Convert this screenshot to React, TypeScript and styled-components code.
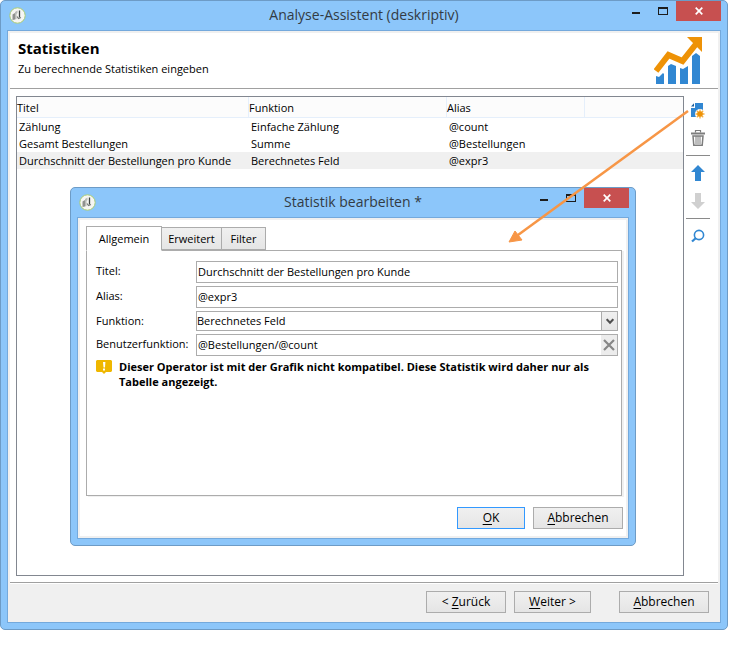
import React from "react";
import styled, { createGlobalStyle, css } from "styled-components";

const GlobalStyle = createGlobalStyle`
  * { box-sizing: border-box; }
  html, body { margin: 0; padding: 0; background: #fff; }
  body, button, input, select {
    font-family: "Open Sans", "Noto Sans", sans-serif;
    font-size: 11px;
    line-height: 16px;
    color: #000;
  }
  h1, h2, p { margin: 0; }
`;

const Desktop = styled.main`
  display: flex;
  min-height: 100vh;
  padding: 0 13px 17px 0;
`;

const WindowFrame = styled.section`
  position: relative;
  flex: 1;
  display: flex;
  flex-direction: column;
  min-width: 0;
  padding: 0 6px 6px;
  border: 1px solid #6d9bc6;
  border-radius: 5px;
  background: #8cc6fa;
`;

const DialogFrame = styled(WindowFrame)`
  position: absolute;
  top: 186px;
  left: 69px;
  right: 91px;
`;

const TitleBar = styled.header`
  display: grid;
  grid-template-columns: 140px 1fr 140px;
  height: 29px;
  align-items: start;
`;

const AppBadge = styled.span`
  display: flex;
  padding: 6px 0 0 2px;
`;

const WindowTitle = styled.h1`
  font-size: 14px;
  font-weight: 400;
  line-height: 28px;
  text-align: center;
  color: #333b44;
  white-space: nowrap;
`;

const WindowControls = styled.div`
  display: flex;
  justify-content: flex-end;
`;

const ControlButton = styled.button<{ $close?: boolean }>`
  display: flex;
  align-items: center;
  justify-content: center;
  width: ${(p) => (p.$close ? 45 : 27)}px;
  height: 20px;
  padding: 0;
  border: 0;
  background: ${(p) => (p.$close ? "#c75050" : "transparent")};
`;

const WindowBody = styled.div`
  flex: 1;
  display: flex;
  flex-direction: column;
  border: 1px solid #74a9dc;
  background: #fff;
  box-shadow: inset 0 0 0 2px #f0f0f0;
  padding: 2px;
`;

const PageHeader = styled.div`
  display: flex;
  justify-content: space-between;
  align-items: flex-start;
  height: 56px;
  padding: 4px 15px 0 8px;
  border-bottom: 1px solid #a0a0a0;
`;

const PageTitle = styled.h2`
  font-size: 15px;
  line-height: 22px;
  font-weight: 700;
`;

const PageHint = styled.p`
  padding-top: 2px;
`;

const Content = styled.div`
  flex: 1;
  display: flex;
  padding: 7px 0 6px 6px;
`;

const ListBox = styled.div`
  flex: 1;
  min-width: 0;
  border: 1px solid #828790;
`;

const StatTable = styled.table`
  width: 100%;
  table-layout: fixed;
  border-collapse: separate;
  border-spacing: 0;
`;

const Column = styled.col<{ $width?: number }>`
  ${(p) => p.$width && css`width: ${p.$width}px;`}
`;

const HeadCell = styled.th`
  height: 21px;
  padding: 1px 0 0;
  text-align: left;
  font-weight: 400;
  background: #fcfcfc;
  border-bottom: 1px solid #e5effb;
  border-right: 1px solid #e5effb;
  &:last-child { border-right: 0; }
`;

const BodyRow = styled.tr<{ $selected?: boolean }>`
  background: ${(p) => (p.$selected ? "#f0f0f0" : "#fff")};
`;

const BodyCell = styled.td`
  height: 17px;
  padding: 0 0 0 2px;
  white-space: nowrap;
`;

const ToolBar = styled.div`
  display: flex;
  flex-direction: column;
  align-items: center;
  gap: 6px;
  width: 34px;
  padding: 3px 6px 0 0;
`;

const ToolButton = styled.button`
  display: flex;
  align-items: center;
  justify-content: center;
  width: 22px;
  height: 22px;
  padding: 0;
  border: 0;
  background: transparent;
`;

const ToolRule = styled.hr`
  width: 24px;
  margin: 0;
  border: 0;
  border-top: 1px solid #8a8a8a;
`;

const Footer = styled.footer`
  display: flex;
  gap: 8px;
  justify-content: flex-end;
  padding: 8px 9px 7px;
  border-top: 1px solid #a0a0a0;
  background: #f0f0f0;
  box-shadow: inset 0 1px 0 #fff;
`;

const PushButton = styled.button<{ $width: number; $primary?: boolean; $apart?: boolean }>`
  width: ${(p) => p.$width}px;
  height: 22px;
  margin-left: ${(p) => (p.$apart ? 20 : 0)}px;
  padding: 0;
  border: 1px solid ${(p) => (p.$primary ? "#3399ff" : "#acacac")};
  background: linear-gradient(#f0f0f0, #e5e5e5);
  font-size: 12px;
  u { text-underline-offset: 2px; }
`;

const DialogContent = styled.form`
  display: flex;
  flex-direction: column;
  padding: 6px 3px 7px 6px;
`;

const TabList = styled.div`
  display: flex;
  align-items: flex-end;
  z-index: 1;
`;

const Tab = styled.button<{ $active?: boolean; $width: number }>`
  width: ${(p) => p.$width}px;
  height: ${(p) => (p.$active ? 25 : 23)}px;
  margin: 0 0 ${(p) => (p.$active ? -1 : 0)}px ${(p) => (p.$active ? 0 : -1)}px;
  padding: 0;
  border: 1px solid #acacac;
  border-bottom-color: ${(p) => (p.$active ? "#fff" : "#acacac")};
  background: ${(p) => (p.$active ? "#fff" : "linear-gradient(#f0f0f0, #e5e5e5)")};
`;

const TabPanel = styled.div`
  display: grid;
  grid-template-columns: 100px 1fr;
  grid-auto-rows: min-content;
  row-gap: 3px;
  min-height: 246px;
  margin-right: 1px;
  padding: 10px 3px 0 9px;
  border: 1px solid #acacac;
  box-shadow: 2px 1px 0 #f0f0f0;
`;

const FieldLabel = styled.label`
  line-height: 20px;
`;

const fieldBox = css`
  width: 100%;
  height: 22px;
  padding: 0 0 1px 1px;
  border: 1px solid #acacac;
  border-radius: 0;
  background: #fff;
  outline: none;
`;

const TextField = styled.input`
  ${fieldBox}
`;

const ComboBox = styled.div`
  display: grid;
`;

const Combo = styled.select`
  ${fieldBox}
  grid-area: 1 / 1;
  height: 20px;
  padding: 0;
  appearance: none;
`;

const ComboArrow = styled.span`
  grid-area: 1 / 1;
  justify-self: end;
  display: flex;
  align-items: center;
  justify-content: center;
  width: 17px;
  margin: 0;
  border: 1px solid #acacac;
  background: linear-gradient(#f0f0f0, #e5e5e5);
  pointer-events: none;
`;

const ClearableField = styled.div`
  display: flex;
  border: 1px solid #acacac;
`;

const BareInput = styled.input`
  flex: 1;
  min-width: 0;
  height: 20px;
  padding: 0 0 1px 1px;
  border: 0;
  outline: none;
`;

const ClearButton = styled.button`
  display: flex;
  align-items: center;
  justify-content: center;
  width: 16px;
  padding: 0;
  border: 0;
  background: #ececec;
`;

const Warning = styled.div`
  grid-column: 1 / -1;
  display: flex;
  gap: 7px;
  padding-right: 8px;
  font-weight: 700;
  line-height: 15px;
`;

const WarningIcon = styled.svg`
  flex: none;
  margin-top: 1px;
`;

const DialogButtons = styled.div`
  display: flex;
  justify-content: flex-end;
  gap: 8px;
  padding-top: 11px;
`;

const Pointer = styled.svg`
  position: absolute;
  top: 109px;
  right: 37px;
  pointer-events: none;
`;

function Emblem() {
  return (
    <svg width="17" height="17" viewBox="0 0 17 17" aria-hidden="true">
      <circle cx="8.5" cy="8.5" r="7.700" fill="#f6f6f3" stroke="#a9cc74" strokeWidth="1" />
      <path d="M3.500 7.500L6 6v6.500l-2.500.5z" fill="#8f918e" />
      <path d="M6 5l2.500-1.500V6L7.500 7v5L6 12.500z" fill="#b9bbb8" />
      <path d="M10.500 3.500v7" stroke="#3f4442" strokeWidth="1.300" />
      <path d="M8 9.500l1.500 2 2.500-1" fill="none" stroke="#777b78" strokeWidth="1.200" />
    </svg>
  );
}

function TitleRow({ title }: { title: string }) {
  return (
    <TitleBar>
      <AppBadge><Emblem /></AppBadge>
      <WindowTitle>{title}</WindowTitle>
      <WindowControls>
        <ControlButton type="button" aria-label="Minimieren">
          <svg width="10" height="10"><rect x="1" y="6" width="8" height="2" fill="#1d1d1d" /></svg>
        </ControlButton>
        <ControlButton type="button" aria-label="Maximieren">
          <svg width="10" height="8" shapeRendering="crispEdges">
            <path d="M0 0h10v8H0zM1 2v5h8V2z" fill="#1d1d1d" fillRule="evenodd" />
          </svg>
        </ControlButton>
        <ControlButton type="button" $close aria-label="Schließen">
          <svg width="8" height="8" viewBox="0 0 8 8">
            <path d="M.7.7l6.6 6.6M7.3.7L.7 7.3" stroke="#fff" strokeWidth="1.7" />
          </svg>
        </ControlButton>
      </WindowControls>
    </TitleBar>
  );
}

function ChartLogo() {
  return (
    <svg width="49" height="48" viewBox="0 0 49 48" aria-hidden="true">
      <path fill="#3187d2" d="M2 39l3 1 4-4 1 1v10H2zM14 29l3-2 5 2v18h-8zM26 31l3 1 5-3v18h-8zM38 19l4-3 4 3v28h-8z" />
      <path d="M2 34L14.500 18l14 6L42 7" fill="none" stroke="#ee9206" strokeWidth="6" />
      <path d="M33 0h15v15z" fill="#ee9206" />
    </svg>
  );
}

function NewIcon() {
  return (
    <svg width="16" height="17" viewBox="0 0 16 17" aria-hidden="true">
      <path d="M5 1h8v14H1V6h4z" fill="#3187d2" />
      <path d="M1 4.500L4 1.300v3.200z" fill="#1c5f9c" />
      <circle cx="10" cy="12" r="5" fill="#fff" />
      <path d="M10 7.500v9M5.500 12h9M6.800 8.800l6.400 6.400M13.200 8.800l-6.400 6.400" stroke="#f3ae42" strokeWidth="1.300" />
      <circle cx="10" cy="12" r="2.800" fill="#ee9206" />
    </svg>
  );
}

function TrashIcon() {
  return (
    <svg width="14" height="16" viewBox="0 0 14 16" fill="none" stroke="#7d7d7d" aria-hidden="true">
      <path d="M0 3.500h14" strokeWidth="2" />
      <path d="M4.500 2.500v-2h5v2" strokeWidth="1.200" />
      <path d="M2 6l.8 9.300h8.400L12 6z" strokeWidth="1.500" />
      <path d="M5 6v8M7 6v8M9 6v8" strokeWidth="1" />
    </svg>
  );
}

function ArrowIcon({ down }: { down?: boolean }) {
  return (
    <svg width="14" height="16" viewBox="0 0 14 16" aria-hidden="true">
      {down ? (
        <path d="M4 0h6v9h4l-7 7-7-7h4z" fill="#d0d0d0" />
      ) : (
        <path d="M7 0l7 7h-4v9H4V7H0z" fill="#3187d2" />
      )}
    </svg>
  );
}

function SearchIcon() {
  return (
    <svg width="14" height="14" viewBox="0 0 14 14" fill="none" stroke="#3187d2" aria-hidden="true">
      <circle cx="8" cy="6" r="4.600" strokeWidth="1.600" />
      <path d="M5 9l-4 3.500" strokeWidth="2.300" />
    </svg>
  );
}

const statistics = [
  ["Zählung", "Einfache Zählung", "@count"],
  ["Gesamt Bestellungen", "Summe", "@Bestellungen"],
  ["Durchschnitt der Bestellungen pro Kunde", "Berechnetes Feld", "@expr3"],
];

function StatisticsList() {
  return (
    <ListBox>
      <StatTable>
        <colgroup>
          <Column $width={232} />
          <Column $width={198} />
          <Column $width={138} />
          <Column />
        </colgroup>
        <thead>
          <tr>
            <HeadCell>Titel</HeadCell>
            <HeadCell>Funktion</HeadCell>
            <HeadCell>Alias</HeadCell>
            <HeadCell />
          </tr>
        </thead>
        <tbody>
          {statistics.map((row, i) => (
            <BodyRow key={row[2]} $selected={i === 2}>
              {row.map((cell) => <BodyCell key={cell}>{cell}</BodyCell>)}
              <BodyCell />
            </BodyRow>
          ))}
        </tbody>
      </StatTable>
    </ListBox>
  );
}

function EditDialog() {
  return (
    <DialogFrame role="dialog" aria-label="Statistik bearbeiten">
      <TitleRow title="Statistik bearbeiten *" />
      <WindowBody>
        <DialogContent onSubmit={(e) => e.preventDefault()}>
          <TabList role="tablist">
            <Tab type="button" role="tab" aria-selected $active $width={76}>Allgemein</Tab>
            <Tab type="button" role="tab" aria-selected={false} $width={61}>Erweitert</Tab>
            <Tab type="button" role="tab" aria-selected={false} $width={45}>Filter</Tab>
          </TabList>
          <TabPanel role="tabpanel">
            <FieldLabel htmlFor="titel">Titel:</FieldLabel>
            <TextField id="titel" defaultValue="Durchschnitt der Bestellungen pro Kunde" />
            <FieldLabel htmlFor="alias">Alias:</FieldLabel>
            <TextField id="alias" defaultValue="@expr3" />
            <FieldLabel htmlFor="funktion">Funktion:</FieldLabel>
            <ComboBox>
              <Combo id="funktion" defaultValue="feld">
                <option value="feld">Berechnetes Feld</option>
              </Combo>
              <ComboArrow>
                <svg width="8" height="7" viewBox="0 0 8 7">
                  <path d="M.7 1.200L4 4.800l3.300-3.600" fill="none" stroke="#505050" strokeWidth="2" />
                </svg>
              </ComboArrow>
            </ComboBox>
            <FieldLabel htmlFor="benutzer">Benutzerfunktion:</FieldLabel>
            <ClearableField>
              <BareInput id="benutzer" defaultValue="@Bestellungen/@count" />
              <ClearButton type="button" aria-label="Leeren">
                <svg width="12" height="12" viewBox="0 0 12 12">
                  <path d="M1 1l10 10M11 1L1 11" stroke="#868686" strokeWidth="2.200" />
                </svg>
              </ClearButton>
            </ClearableField>
            <Warning role="alert">
              <WarningIcon width="16" height="14" viewBox="0 0 16 14" aria-hidden="true">
                <path d="M1 0h14l1 1v10l-1 1h-5l-2 2-2-2H1l-1-1V1z" fill="#efb700" />
                <path d="M7 2h2.400L9 7.500H7.500zM7 8.500h2v2H7z" fill="#fff" />
              </WarningIcon>
              <p>
                Dieser Operator ist mit der Grafik nicht kompatibel. Diese Statistik wird daher nur als Tabelle
                angezeigt.
              </p>
            </Warning>
          </TabPanel>
          <DialogButtons>
            <PushButton type="submit" $width={68} $primary><u>O</u>K</PushButton>
            <PushButton type="button" $width={90}><u>A</u>bbrechen</PushButton>
          </DialogButtons>
        </DialogContent>
      </WindowBody>
    </DialogFrame>
  );
}

export default function App() {
  return (
    <>
      <GlobalStyle />
      <Desktop>
        <WindowFrame>
          <TitleRow title="Analyse-Assistent (deskriptiv)" />
          <WindowBody>
            <PageHeader>
              <div>
                <PageTitle>Statistiken</PageTitle>
                <PageHint>Zu berechnende Statistiken eingeben</PageHint>
              </div>
              <ChartLogo />
            </PageHeader>
            <Content>
              <StatisticsList />
              <ToolBar>
                <ToolButton type="button" aria-label="Neu"><NewIcon /></ToolButton>
                <ToolButton type="button" aria-label="Löschen"><TrashIcon /></ToolButton>
                <ToolRule />
                <ToolButton type="button" aria-label="Nach oben"><ArrowIcon /></ToolButton>
                <ToolButton type="button" aria-label="Nach unten"><ArrowIcon down /></ToolButton>
                <ToolRule />
                <ToolButton type="button" aria-label="Suchen"><SearchIcon /></ToolButton>
              </ToolBar>
            </Content>
            <Footer>
              <PushButton type="button" $width={80}>&lt; <u>Z</u>urück</PushButton>
              <PushButton type="button" $width={77}><u>W</u>eiter &gt;</PushButton>
              <PushButton type="button" $width={90} $apart><u>A</u>bbrechen</PushButton>
            </Footer>
          </WindowBody>
          <EditDialog />
          <Pointer width="182" height="136" viewBox="0 0 182 136" aria-hidden="true">
            <path d="M180 1L10 125" stroke="#f79646" strokeWidth="2.500" />
            <path d="M1 132l6-11 7 9z" fill="#f79646" stroke="#f79646" />
          </Pointer>
        </WindowFrame>
      </Desktop>
    </>
  );
}
